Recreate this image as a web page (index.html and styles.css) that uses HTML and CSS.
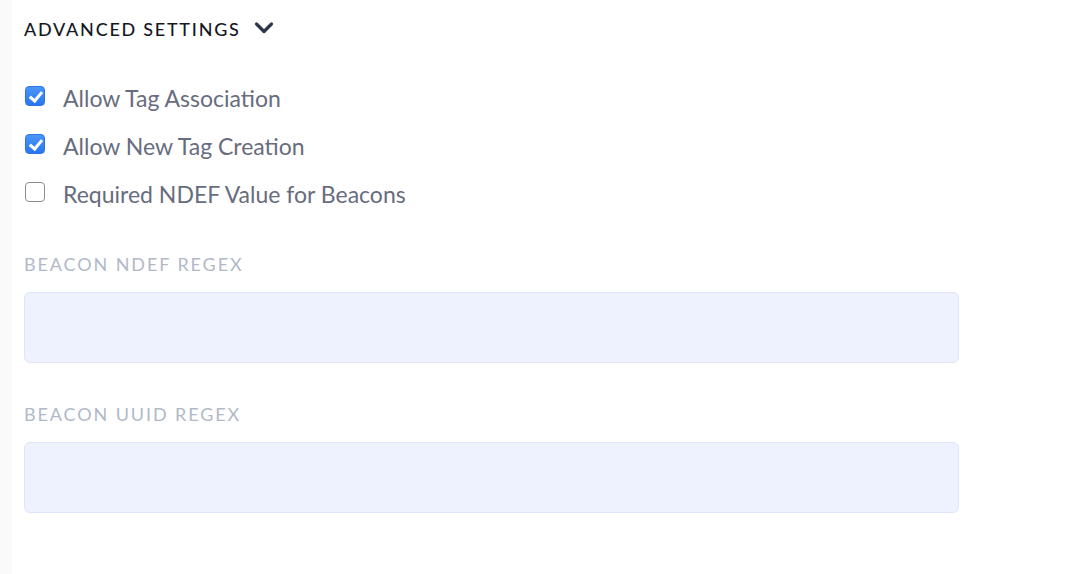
FILE: index.html
```html
<!DOCTYPE html>
<html>
<head>
<meta charset="utf-8">
<link rel="stylesheet" href="styles.css">
</head>
<body>
<div class="page">
  <div class="panel">
    <div class="section-head">
      <span class="section-title">ADVANCED SETTINGS</span>
      <svg class="chevron" width="20" height="14" viewBox="0 0 20 14"><path d="M2.5 3 L10 10.5 L17.5 3" fill="none" stroke="#2d3748" stroke-width="3.2" stroke-linecap="round" stroke-linejoin="round"/></svg>
    </div>
    <div class="checks">
      <label class="check-row"><input type="checkbox" class="cb" checked><span>Allow Tag Association</span></label>
      <label class="check-row"><input type="checkbox" class="cb" checked><span>Allow New Tag Creation</span></label>
      <label class="check-row"><input type="checkbox" class="cb"><span>Required NDEF Value for Beacons</span></label>
    </div>
    <div class="field">
      <div class="field-label">BEACON NDEF REGEX</div>
      <input type="text" class="field-input">
    </div>
    <div class="field">
      <div class="field-label">BEACON UUID REGEX</div>
      <input type="text" class="field-input">
    </div>
  </div>
</div>
</body>
</html>
```

FILE: styles.css
```css
html, body {
  margin: 0;
  padding: 0;
  background: #fafafa;
}
.page {
  padding-left: 12px;
  height: 574px;
  box-sizing: border-box;
}
.panel {
  background: #ffffff;
  height: 100%;
  padding: 16px 0 0 12px;
  box-sizing: border-box;
  font-family: "Lato", "Noto Sans", sans-serif;
}
.section-head {
  display: flex;
  align-items: center;
  height: 26px;
}
.section-title {
  font-size: 18px;
  letter-spacing: 1.75px;
  color: #15181f;
  font-weight: 500;
}
.chevron {
  margin-left: 13px;
  margin-top: -2px;
}
.checks {
  margin-top: 41px;
  display: flex;
  flex-direction: column;
  gap: 18px;
}
.check-row {
  display: flex;
  align-items: center;
  height: 30px;
  font-size: 23px;
  color: #676c7e;
}
.cb {
  appearance: none;
  -webkit-appearance: none;
  margin: 0 18px 0 1px;
  width: 20px;
  height: 20px;
  border: 1px solid #8c8c8c;
  border-radius: 4px;
  background: #ffffff;
  position: relative;
  box-sizing: border-box;
  flex: none;
  margin-top: -5px;
}
.cb:checked {
  background: linear-gradient(#4a95f8, #2b76ef);
  border-color: #2b74ea;
}
.cb:checked::after {
  content: "";
  position: absolute;
  left: 6px;
  top: 2px;
  width: 5px;
  height: 10px;
  border-right: 3px solid #fff;
  border-bottom: 3px solid #fff;
  transform: rotate(40deg);
}
.field {
  margin-top: 44px;
}
.field + .field {
  margin-top: 40px;
}
.field-label {
  font-size: 18px;
  letter-spacing: 1.9px;
  color: #b1b9c9;
  height: 22px;
}
.field-input {
  display: block;
  margin-top: 17px;
  width: 935px;
  height: 71px;
  box-sizing: border-box;
  background: #eef1fe;
  border: 1px solid #dde4fb;
  border-radius: 6px;
  outline: none;
}
```
